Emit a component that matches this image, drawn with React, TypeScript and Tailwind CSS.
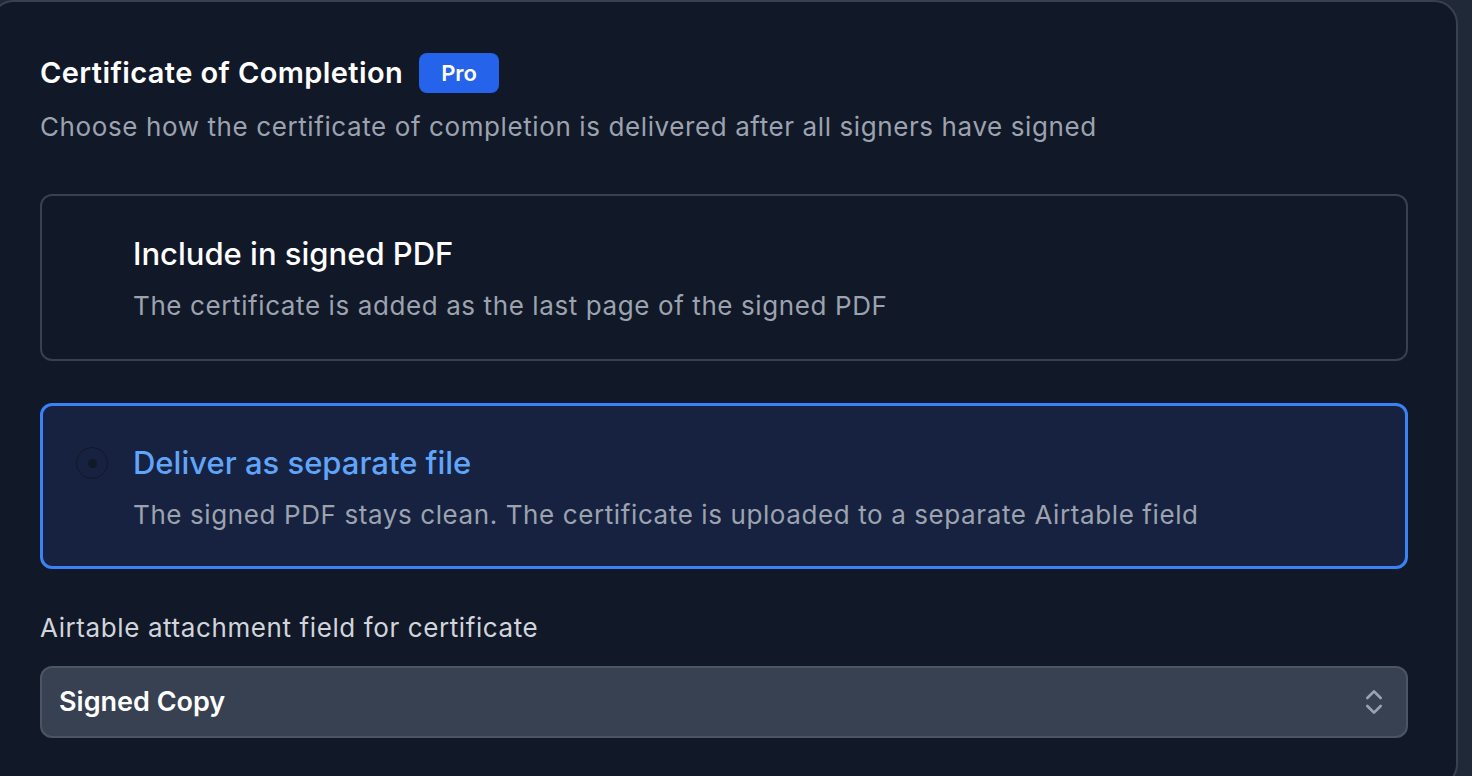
import { ChevronsUpDown } from "lucide-react";

type Option = {
  id: string;
  title: string;
  description: string;
};

const options: Option[] = [
  {
    id: "embed",
    title: "Include in signed PDF",
    description: "The certificate is added as the last page of the signed PDF",
  },
  {
    id: "separate",
    title: "Deliver as separate file",
    description:
      "The signed PDF stays clean. The certificate is uploaded to a separate Airtable field",
  },
];

function DeliveryOption({ option, selected }: { option: Option; selected: boolean }) {
  return (
    <div
      className={
        selected
          ? "flex items-center gap-[25px] rounded-[12px] border-[3px] border-[#3b82f6] bg-[#162240] pl-[33px] pt-[37px] pb-[33px]"
          : "flex items-center gap-[25px] rounded-[12px] border-2 border-[#374151] bg-[#111827] pl-[34px] pt-[38px] pb-[35px]"
      }
    >
      <span className="mt-[4px] flex h-[32px] w-[32px] shrink-0 items-center justify-center self-start rounded-full border-[1.5px] border-[#111827]">
        {selected && <span className="h-[9px] w-[9px] rounded-full bg-[#111827]" />}
      </span>
      <div className="flex flex-col gap-[14px]">
        <p
          className={
            selected
              ? "text-[31px] leading-[40px] font-medium text-[#60a5fa]"
              : "text-[31px] leading-[40px] font-medium text-white"
          }
        >
          {option.title}
        </p>
        <p className="text-[26px] leading-[36px] tracking-[0.6px] text-[#9ca3af]">
          {option.description}
        </p>
      </div>
    </div>
  );
}

export default function App() {
  const selectedId = "separate";

  return (
    <div
      className="min-h-screen overflow-hidden bg-[#1f2937]"
      style={{ fontFamily: "Inter, 'Noto Sans', sans-serif" }}
    >
      <div className="-ml-[10px] w-[1468px] rounded-[24px] border-2 border-[#374151] bg-[#111827] px-[48px] pt-[51px] pb-[48px]">
        <div className="flex h-[40px] items-center gap-[16px]">
          <h2 className="text-[29px] font-semibold tracking-[0.4px] text-white">
            Certificate of Completion
          </h2>
          <span className="flex h-[40px] w-[80px] items-center justify-center rounded-[8px] bg-[#2563eb] text-[22px] font-semibold text-white">
            Pro
          </span>
        </div>
        <p className="mt-[16px] text-[26px] leading-[36px] tracking-[0.6px] text-[#9ca3af]">
          Choose how the certificate of completion is delivered after all signers have signed
        </p>

        <div className="mt-[49px] flex flex-col gap-[42px]">
          {options.map((o) => (
            <DeliveryOption key={o.id} option={o} selected={o.id === selectedId} />
          ))}
        </div>

        <label className="mt-[41px] block text-[26px] leading-[36px] tracking-[0.6px] text-[#d1d5db]">
          Airtable attachment field for certificate
        </label>
        <div className="mt-[20px] flex h-[72px] items-center justify-between rounded-[12px] border-2 border-[#4b5563] bg-[#374151] pl-[17px] pr-[16px]">
          <span className="text-[27px] font-semibold text-white">Signed Copy</span>
          <ChevronsUpDown className="h-[32px] w-[32px] text-[#9ca3af]" strokeWidth={2} />
        </div>
      </div>
    </div>
  );
}
